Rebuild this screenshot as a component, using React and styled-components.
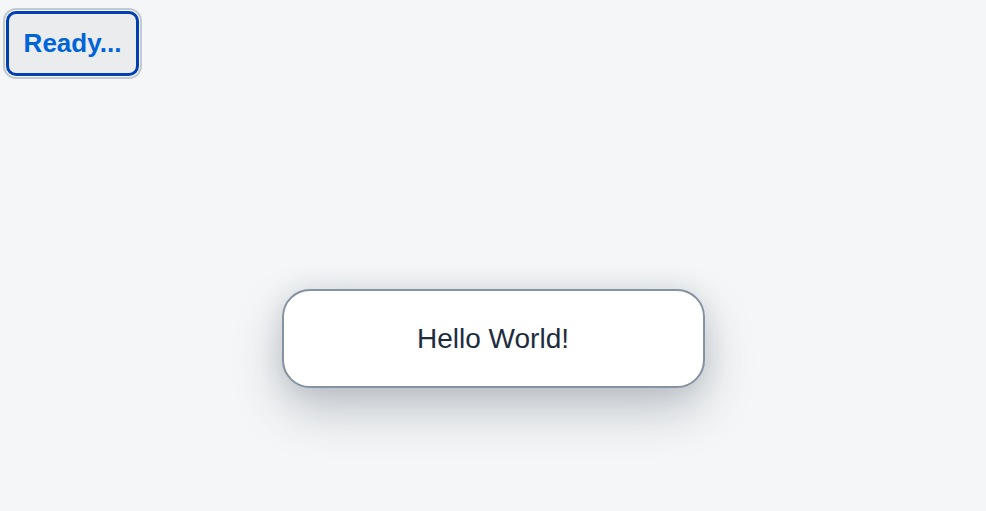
import React from 'react'
import styled, { createGlobalStyle } from 'styled-components'

const GlobalStyle = createGlobalStyle`
	html, body {
		margin: 0;
		padding: 0;
		background: #f5f6f7;
		font-family: "Liberation Sans", Arial, sans-serif;
	}
`

const Page = styled.div`
	& {
		height: 100vh;
		display: flex;
		flex-direction: column;
		align-items: center;
		box-sizing: border-box;
		padding: 11px 0 123px 0;
	}
`

const Toolbar = styled.div`
	& {
		align-self: flex-start;
		margin-left: 6px;
	}
`

const ReadyButton = styled.button`
	& {
		width: 133px;
		height: 65px;
		padding: 0;
		background: #eaecee;
		border: 3px solid #0040b0;
		border-radius: 10px;
		box-shadow: 0 0 0 1px #f5f6f7, 0 0 0 3px #c3c9d0;
		box-sizing: border-box;
		color: #0064d9;
		font-family: "Liberation Sans", Arial, sans-serif;
		font-weight: bold;
		font-size: 26px;
		cursor: pointer;
	}
`

const Spacer = styled.div`
	flex: 1;
`

const Toast = styled.div`
	& {
		width: 423px;
		height: 99px;
		box-sizing: border-box;
		display: flex;
		align-items: center;
		justify-content: center;
		background: #ffffff;
		border: 2px solid #8592a1;
		border-radius: 28px;
		box-shadow: 0 22px 48px rgba(34, 53, 72, 0.26), 0 0 26px rgba(34, 53, 72, 0.1);
		color: #1d2d3e;
		font-size: 28px;
	}
`

const App = () => {
	return (
		<>
			<GlobalStyle />
			<Page>
				<Toolbar>
					<ReadyButton>Ready...</ReadyButton>
				</Toolbar>
				<Spacer />
				<Toast>Hello World!</Toast>
			</Page>
		</>
	)
}

export default App
